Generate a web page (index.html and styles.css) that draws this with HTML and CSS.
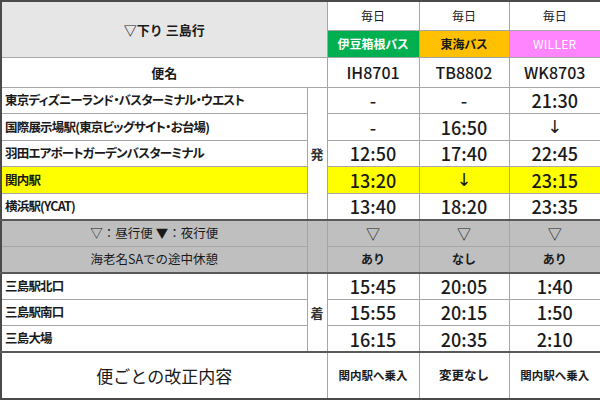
FILE: index.html
```html
<!DOCTYPE html>
<html lang="ja">
<head>
<meta charset="utf-8">
<link rel="stylesheet" href="styles.css">
</head>
<body>
<table class="tt">
  <colgroup>
    <col class="c-st"><col class="c-mk"><col class="c-t"><col class="c-t2"><col class="c-t">
  </colgroup>
  <tr class="r-day">
    <th class="title" colspan="2" rowspan="2">▽下り 三島行</th>
    <td class="day">毎日</td><td class="day">毎日</td><td class="day">毎日</td>
  </tr>
  <tr class="r-bus">
    <td class="bus izu">伊豆箱根バス</td><td class="bus tokai">東海バス</td><td class="bus willer">WILLER</td>
  </tr>
  <tr class="r-no">
    <th class="bin" colspan="2">便名</th>
    <td class="no">IH8701</td><td class="no">TB8802</td><td class="no">WK8703</td>
  </tr>
  <tr class="r">
    <td class="st">東京ディズニーランド・バスターミナル・ウエスト</td>
    <td class="mk" rowspan="5">発</td>
    <td class="tm">-</td><td class="tm">-</td><td class="tm">21:30</td>
  </tr>
  <tr class="r">
    <td class="st">国際展示場駅(東京ビッグサイト・お台場)</td>
    <td class="tm">-</td><td class="tm">16:50</td><td class="tm arrow">↓</td>
  </tr>
  <tr class="r">
    <td class="st">羽田エアポートガーデンバスターミナル</td>
    <td class="tm">12:50</td><td class="tm">17:40</td><td class="tm">22:45</td>
  </tr>
  <tr class="r hl">
    <td class="st">関内駅</td>
    <td class="tm">13:20</td><td class="tm arrow">↓</td><td class="tm">23:15</td>
  </tr>
  <tr class="r">
    <td class="st">横浜駅(YCAT)</td>
    <td class="tm">13:40</td><td class="tm">18:20</td><td class="tm">23:35</td>
  </tr>
  <tr class="r gr dk">
    <td class="note">▽：昼行便 ▼：夜行便</td>
    <td class="mk" rowspan="2"></td>
    <td class="tri">▽</td><td class="tri">▽</td><td class="tri">▽</td>
  </tr>
  <tr class="r gr">
    <td class="note">海老名SAでの途中休憩</td>
    <td class="yn">あり</td><td class="yn">なし</td><td class="yn">あり</td>
  </tr>
  <tr class="r dk">
    <td class="st">三島駅北口</td>
    <td class="mk" rowspan="3">着</td>
    <td class="tm">15:45</td><td class="tm">20:05</td><td class="tm">1:40</td>
  </tr>
  <tr class="r">
    <td class="st">三島駅南口</td>
    <td class="tm">15:55</td><td class="tm">20:15</td><td class="tm">1:50</td>
  </tr>
  <tr class="r">
    <td class="st">三島大場</td>
    <td class="tm">16:15</td><td class="tm">20:35</td><td class="tm">2:10</td>
  </tr>
  <tr class="r-rev dk">
    <td class="rev" colspan="2">便ごとの改正内容</td>
    <td class="rv">関内駅へ乗入</td><td class="rv big">変更なし</td><td class="rv">関内駅へ乗入</td>
  </tr>
</table>
</body>
</html>
```

FILE: styles.css
```css
html, body {
  margin: 0;
  padding: 0;
  background: #ffffff;
}
body {
  font-family: "Noto Sans CJK JP", "Noto Sans", sans-serif;
  color: #1a1a1a;
}
.tt {
  width: 600px;
  height: 400px;
  border-collapse: collapse;
  table-layout: fixed;
  border: 2px solid #4a4a4a;
}
.c-st { width: 306px; }
.c-mk { width: 20px; }
.c-t { width: 92px; }
.c-t2 { width: 90px; }
.tt th, .tt td {
  border: 1px solid #a6a6a6;
  padding: 0;
  text-align: center;
  vertical-align: middle;
  overflow: hidden;
  white-space: nowrap;
  line-height: 1;
}
.r-day { height: 29px; }
.r-bus { height: 27px; }
.r-no { height: 30px; }
.r { height: 26.5px; }
.r-rev { height: 47px; }
.title {
  background: #e7e6e6;
  font-size: 13px;
  font-weight: 700;
}
.day {
  font-size: 12px;
  font-weight: 400;
}
.bus {
  font-size: 12px;
  font-weight: 700;
  font-feature-settings: "palt";
}
.izu { background: #00b050; color: #ffffff; }
.tokai { background: #ffc000; color: #1a1a1a; }
.willer { background: #ff85ff; color: #ffffff; font-weight: 400; letter-spacing: 0.3px; }
.bin {
  font-size: 13px;
  font-weight: 700;
}
.no {
  font-size: 16px;
  font-weight: 500;
}
.st {
  text-align: left !important;
  padding-left: 3px !important;
  font-size: 12.5px;
  font-weight: 700;
  letter-spacing: -0.8px;
  font-feature-settings: "palt";
}
.mk {
  font-size: 13px;
  font-weight: 700;
  color: #333;
}
.tm {
  font-size: 18px;
  font-weight: 500;
}
.tm.arrow {
  font-family: "DejaVu Sans", sans-serif;
  font-size: 18px;
  font-weight: 400;
  color: #1a1a1a;
}
.hl td { background: #ffff00; }
.hl td.mk { background: #ffffff; }
.gr td { background: #bfbfbf; }
.note {
  font-size: 12.5px;
  font-weight: 400;
}
.tri { font-size: 14px; }
.yn {
  font-size: 12px;
  font-weight: 700;
}
.dk td { border-top: 2px solid #595959; }
.rev {
  font-size: 17px;
  font-weight: 400;
}
.rv {
  font-size: 11.5px;
  font-weight: 700;
}
.rv.big { font-size: 12.5px; }
```
